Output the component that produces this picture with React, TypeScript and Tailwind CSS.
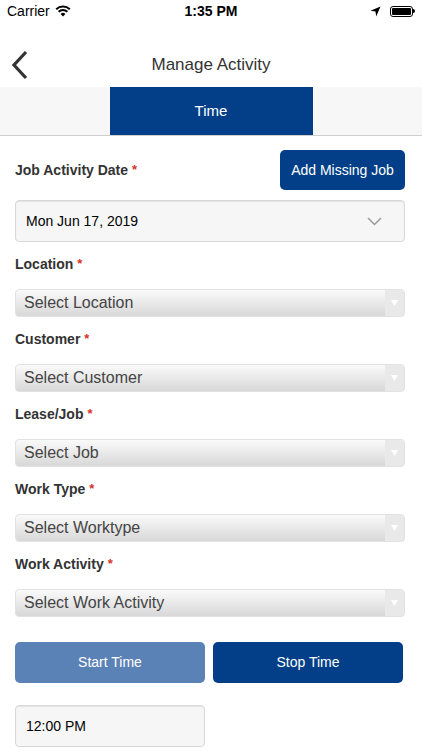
const font = { fontFamily: '"Liberation Sans", Arial, sans-serif' }

function Label({ text }: { text: string }) {
  return (
    <div className="flex h-5 items-center text-[14px] font-bold text-[#333]">
      {text}
      <span className="ml-1 text-[13px] text-[#d9322c]">*</span>
    </div>
  )
}

function Select({ text }: { text: string }) {
  return (
    <div className="mt-[15px] flex h-7 overflow-hidden rounded-[4px] border border-[#e2e2e2] bg-gradient-to-b from-[#fafafa] to-[#d8d8d8]">
      <div className="flex flex-1 items-center pl-[8px] text-[16px] text-[#444]">{text}</div>
      <div className="flex w-[19px] items-center justify-center bg-[#e9e9e9]">
        <svg width="7" height="6" viewBox="0 0 7 6">
          <path d="M0 0 H7 L3.5 6 Z" fill="#fff" />
        </svg>
      </div>
    </div>
  )
}

export default function App() {
  const fields = [
    ['Location', 'Select Location'],
    ['Customer', 'Select Customer'],
    ['Lease/Job', 'Select Job'],
    ['Work Type', 'Select Worktype'],
    ['Work Activity', 'Select Work Activity'],
  ]
  return (
    <div className="h-[750px] w-[422px] overflow-hidden bg-white" style={font}>
      {/* status bar */}
      <div className="flex h-[22px] items-center justify-between px-[7px] text-[14px] text-black">
        <div className="flex w-[120px] items-center gap-[5px]">
          <span>Carrier</span>
          <svg width="16" height="12" viewBox="0 0 16 12">
            <path d="M8 11.5 L5.6 8.9 A3.4 3.4 0 0 1 10.4 8.9 Z" fill="#000" />
            <path d="M3.6 6.8 A6.3 6.3 0 0 1 12.4 6.8" stroke="#000" strokeWidth="1.9" fill="none" />
            <path d="M1.2 4.3 A9.8 9.8 0 0 1 14.8 4.3" stroke="#000" strokeWidth="1.9" fill="none" />
          </svg>
        </div>
        <span className="font-bold">1:35 PM</span>
        <div className="flex w-[120px] items-center justify-end gap-[9px]">
          <svg width="11" height="11" viewBox="0 0 11 11">
            <path d="M10.5 0.5 L0.5 4.8 L5.5 5.5 L6.2 10.5 Z" fill="#000" />
          </svg>
          <div className="flex items-center">
            <div className="h-[11px] w-[23px] rounded-[3px] border border-black p-[1px]">
              <div className="h-full w-full rounded-[1px] bg-black" />
            </div>
            <div className="h-[4px] w-[1.5px] rounded-r bg-black" />
          </div>
        </div>
      </div>

      {/* nav */}
      <div className="relative mt-[21px] flex h-11 items-center justify-center">
        <svg className="absolute left-[10px] top-[6px]" width="20" height="32" viewBox="0 0 20 32">
          <path d="M16 3 L4 16 L16 29" stroke="#333" strokeWidth="3.2" fill="none" />
        </svg>
        <span className="text-[17px] text-[#333]">Manage Activity</span>
      </div>

      {/* tabs */}
      <div className="flex h-[49px] justify-center border-b border-[#cfcfcf] bg-[#f7f7f7]">
        <div className="flex w-[203px] items-center justify-center bg-[#023f88] text-[15px] text-white">Time</div>
      </div>

      <div className="pl-[15px] pr-[17px]">
        <div className="mt-[14px] flex h-10 items-center justify-between">
          <Label text="Job Activity Date" />
          <button className="h-10 w-[125px] rounded-[5px] bg-[#023f88] text-[14px] text-white">Add Missing Job</button>
        </div>
        <div className="mt-[10px] flex h-[42px] items-center justify-between rounded-[4px] border border-[#d8d8d8] bg-[#f6f6f6] pl-[10px] pr-[22px] text-[14px] text-black shadow-[inset_0_1px_1px_rgba(0,0,0,0.08)]">
          <span>Mon Jun 17, 2019</span>
          <svg width="15" height="9" viewBox="0 0 15 9">
            <path d="M1 1 L7.5 7.5 L14 1" stroke="#9a9a9a" strokeWidth="1.5" fill="none" />
          </svg>
        </div>

        {fields.map(([label, placeholder]) => (
          <div key={label} className="mt-[12px]">
            <Label text={label} />
            <Select text={placeholder} />
          </div>
        ))}

        <div className="mt-[25px] flex gap-2">
          <button className="h-[41px] w-[190px] rounded-[5px] bg-[#5b82b6] text-[14px] text-white">Start Time</button>
          <button className="h-[41px] w-[190px] rounded-[5px] bg-[#023f88] text-[14px] text-white">Stop Time</button>
        </div>
        <div className="mt-[22px] flex h-[42px] w-[190px] items-center rounded-[4px] border border-[#d8d8d8] bg-[#f6f6f6] pl-[10px] text-[14px] text-black shadow-[inset_0_1px_1px_rgba(0,0,0,0.08)]">
          12:00 PM
        </div>
      </div>
    </div>
  )
}
